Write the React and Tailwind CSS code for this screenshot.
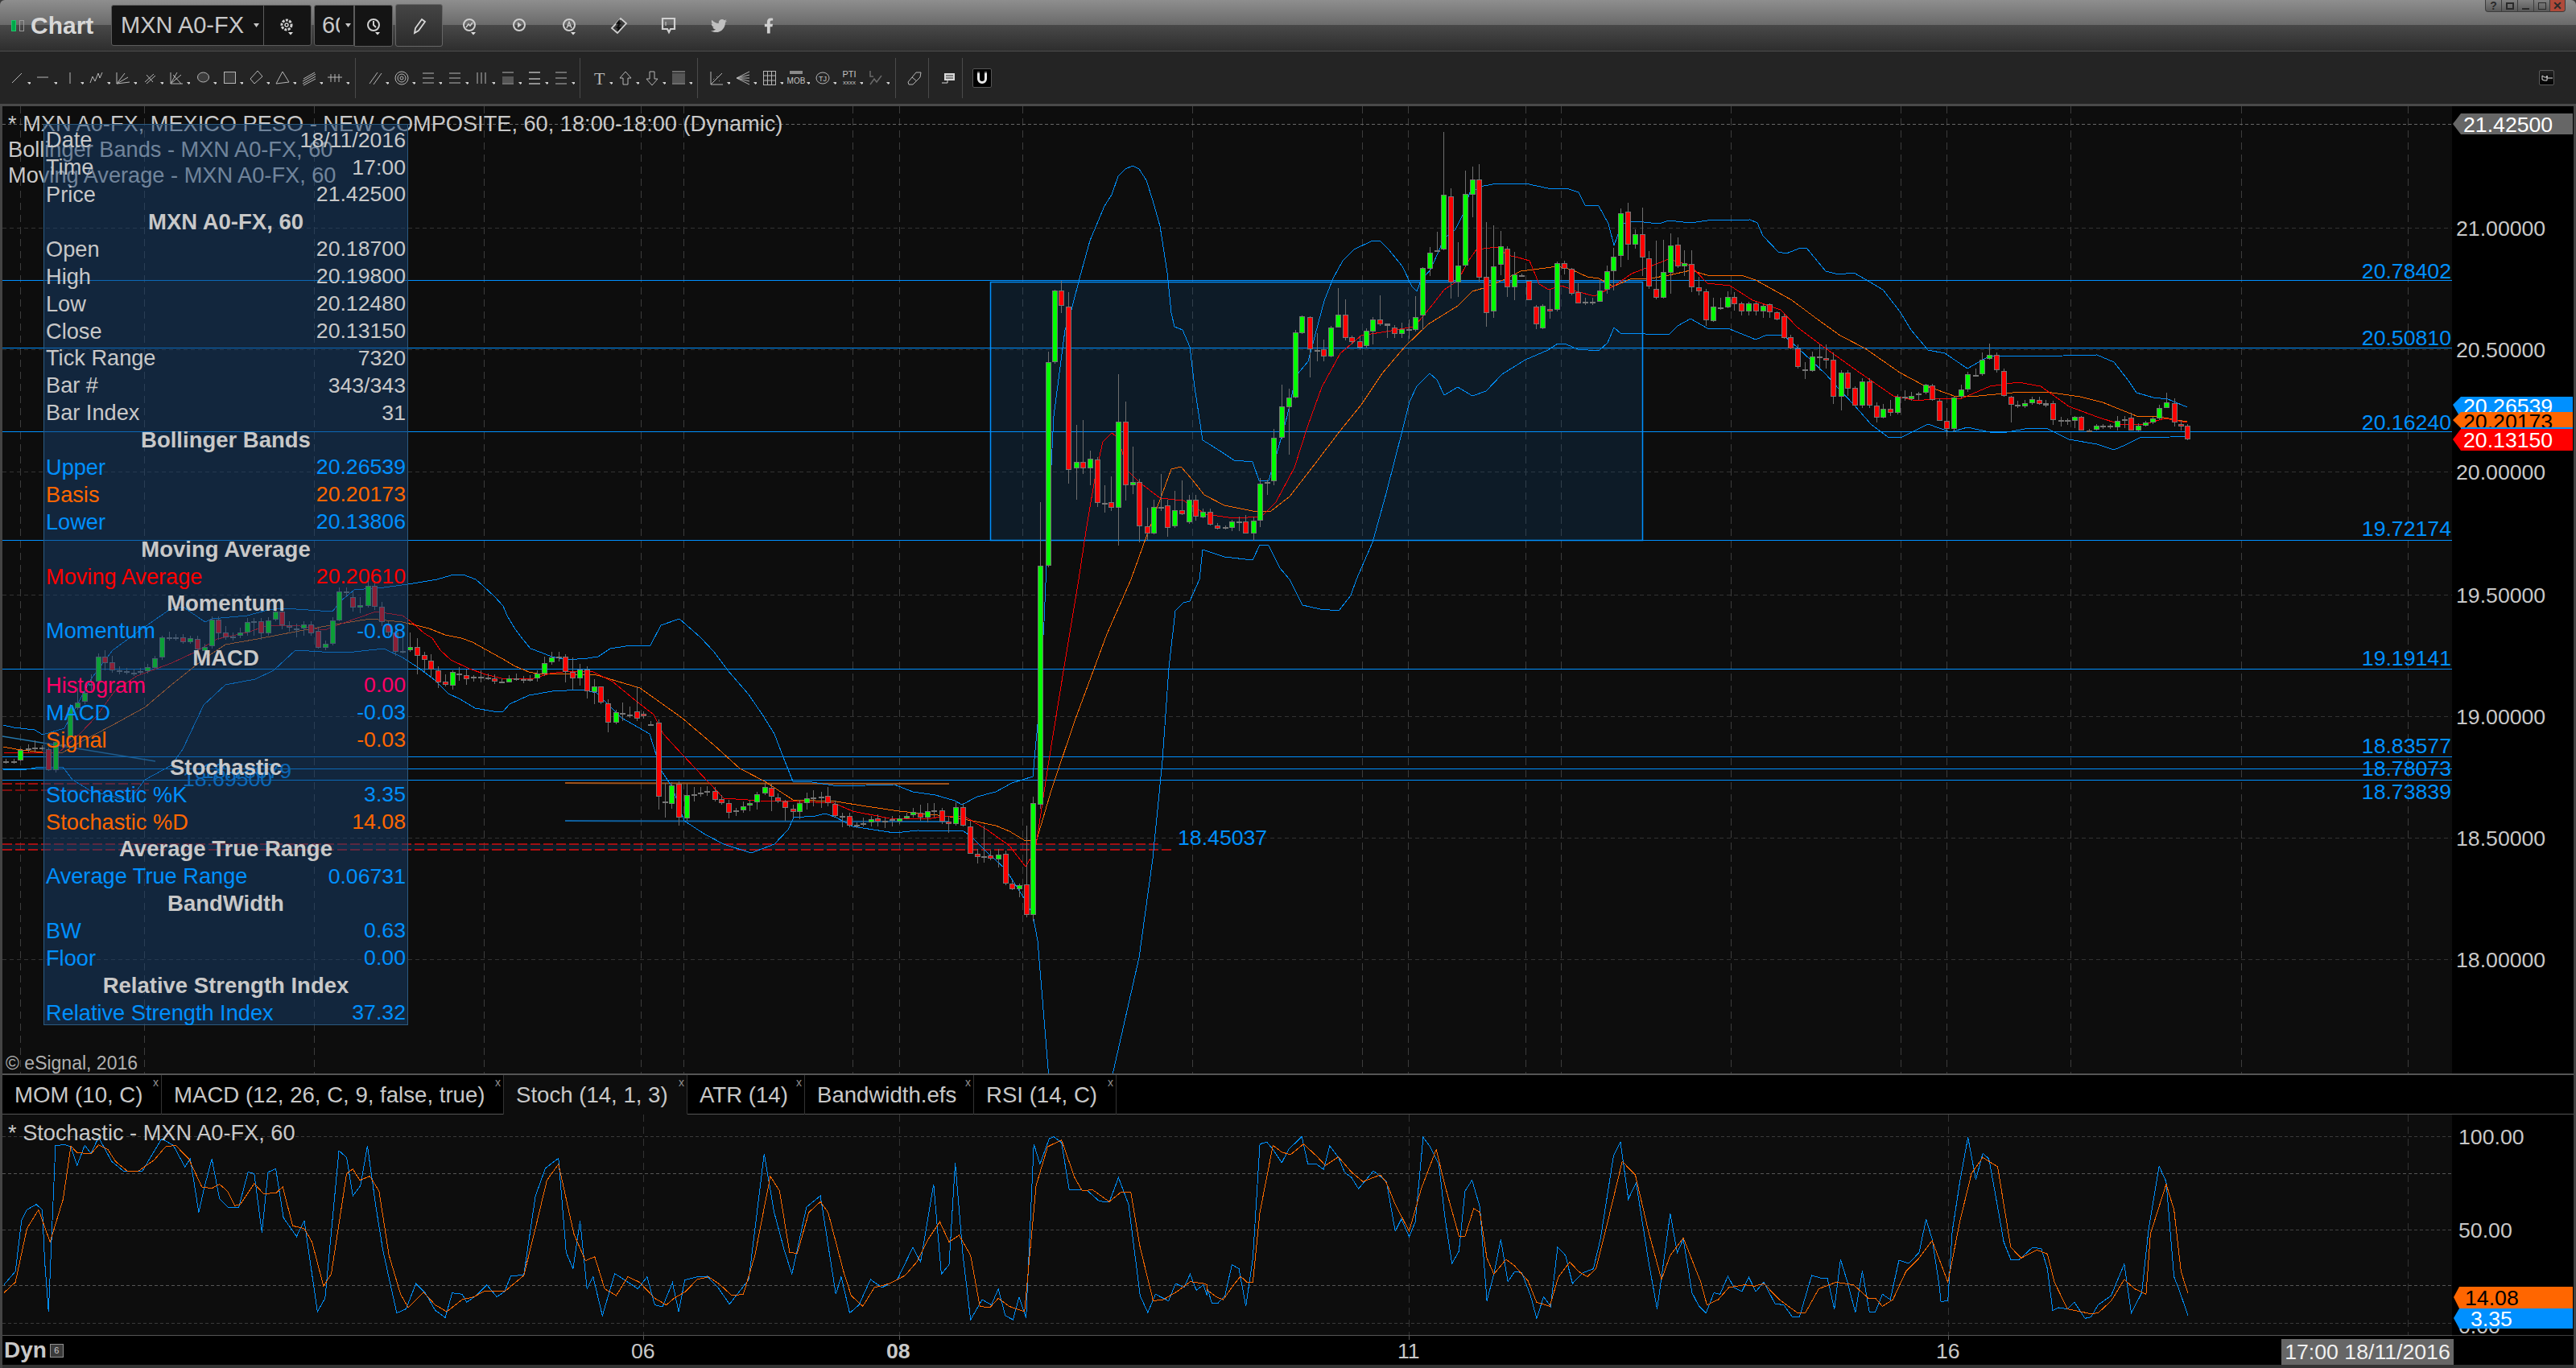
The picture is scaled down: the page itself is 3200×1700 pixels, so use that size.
import React from 'react';
import { FaTwitter, FaFacebookF } from 'react-icons/fa';

// ============================================================================
// CHART DATA (page pixel coordinates)
// ============================================================================

// x, body top, body bottom, wick top, wick bottom, kind
const CANDLES = [
  [7,946,946,943,949,'n'],[17,946,946,943,949,'n'],[25,932,944,930,946,'g'],[35,930,930,925,935,'n'],[43,929,929,920,935,'n'],[52,929,929,926,933,'n'],
  [60,931,956,929,958,'r'],[69,922,956,920,960,'g'],[78,925,925,918,930,'n'],[87,879,915,875,918,'g'],[96,873,879,855,882,'g'],[105,861,871,855,875,'g'],
  [113,850,850,838,858,'n'],[122,816,846,812,850,'g'],[130,816,823,808,833,'r'],[139,823,832,815,836,'r'],[148,833,834,828,838,'r'],[157,834,835,830,838,'r'],
  [166,836,836,831,840,'n'],[174,834,834,830,838,'n'],[183,829,833,825,837,'g'],[192,818,829,815,832,'g'],[201,792,816,790,820,'g'],[210,792,792,785,796,'n'],
  [218,792,792,788,796,'n'],[227,792,797,788,800,'r'],[236,793,797,790,800,'g'],[245,794,806,790,810,'r'],[254,804,808,800,812,'g'],[263,770,802,766,806,'g'],
  [271,770,786,766,795,'r'],[280,786,791,778,795,'r'],[289,791,791,786,796,'n'],[298,786,789,780,793,'g'],[307,773,785,768,790,'g'],[315,772,772,768,790,'n'],
  [324,772,786,768,795,'r'],[333,771,786,767,790,'g'],[342,760,769,752,772,'g'],[350,760,776,756,782,'r'],[359,777,779,772,785,'r'],[368,781,781,775,792,'n'],
  [377,776,780,772,790,'g'],[386,776,786,772,790,'r'],[395,784,804,780,806,'r'],[404,800,804,796,808,'g'],[413,771,799,767,802,'g'],[421,735,770,730,772,'g'],
  [430,735,735,730,742,'n'],[438,742,754,735,760,'r'],[447,752,754,742,762,'g'],[457,728,752,722,755,'g'],[465,728,753,722,758,'r'],[474,754,772,748,778,'r'],
  [482,776,785,772,790,'r'],[491,786,809,780,815,'r'],[500,809,809,785,812,'n'],
  [509,804,807,786,810,'g'],[518,804,814,793,838,'r'],[527,814,819,810,835,'r'],[535,821,831,813,842,'r'],[544,833,847,828,855,'r'],[553,847,850,838,853,'r'],
  [562,835,851,833,857,'g'],[570,837,837,829,846,'n'],[579,839,843,832,851,'r'],[588,841,841,839,847,'n'],[597,841,841,833,848,'n'],[606,842,842,837,845,'n'],
  [614,843,846,838,850,'r'],[623,847,847,843,849,'n'],[632,843,847,839,848,'g'],[641,843,844,837,846,'r'],[650,844,845,840,849,'r'],[658,844,845,839,847,'g'],
  [667,837,842,833,847,'g'],[676,824,836,816,840,'g'],[685,817,822,810,826,'g'],[694,816,816,810,822,'n'],[702,816,834,813,848,'r'],[711,835,842,817,857,'r'],
  [720,832,842,825,852,'g'],[729,832,858,828,868,'r'],[738,853,859,844,875,'g'],[746,853,872,853,875,'r'],
  [755,874,897,869,910,'r'],[765,885,897,882,900,'g'],[773,886,886,873,896,'n'],[782,888,888,878,892,'n'],[791,884,892,853,896,'r'],[799,887,889,884,893,'r'],
  [808,900,900,896,902,'n'],[818,898,989,894,1006,'r'],[826,996,996,973,1016,'n'],[834,976,998,972,1005,'g'],[843,974,1015,971,1026,'r'],[853,988,1016,974,1020,'g'],
  [862,987,987,978,996,'n'],[870,985,985,978,990,'n'],[878,983,983,977,989,'n'],[888,983,993,978,996,'r'],[896,993,997,988,1000,'r'],[905,998,1009,994,1017,'r'],
  [914,1007,1007,1004,1014,'g'],[923,1002,1006,996,1010,'g'],[931,998,1000,994,1008,'g'],[940,987,996,984,1006,'g'],[950,978,985,973,988,'g'],[958,979,989,974,1008,'r'],
  [966,991,995,986,998,'r'],[975,996,1003,994,1020,'r'],[985,1005,1008,1000,1016,'r'],[993,998,1008,994,1018,'g'],[1002,992,997,985,1006,'g'],[1010,991,991,982,1002,'n'],
  [1020,990,990,984,1004,'n'],[1028,989,997,978,1002,'r'],[1037,999,1013,995,1016,'r'],[1046,1014,1014,1010,1028,'n'],[1055,1014,1025,1010,1028,'r'],[1064,1025,1025,1022,1029,'n'],
  [1072,1023,1023,1016,1027,'n'],[1082,1018,1021,1014,1027,'g'],[1090,1017,1020,1012,1027,'r'],[1099,1020,1020,1016,1029,'n'],[1108,1018,1018,1014,1027,'n'],[1117,1017,1020,1013,1024,'g'],
  [1126,1014,1016,1010,1018,'g'],[1134,1009,1012,1004,1016,'g'],[1143,1010,1015,1000,1020,'r'],[1152,1008,1015,998,1022,'g'],[1160,1007,1007,998,1016,'n'],[1170,1007,1020,1004,1024,'r'],
  [1178,1021,1023,1014,1035,'r'],[1187,1003,1023,997,1026,'g'],[1196,1003,1025,998,1027,'r'],[1205,1027,1060,1020,1061,'r'],[1214,1061,1064,1055,1073,'r'],[1222,1064,1064,1026,1072,'n'],
  [1230,1063,1066,1057,1069,'r'],[1240,1062,1067,1055,1078,'g'],[1249,1061,1097,1057,1100,'r'],[1257,1098,1104,1094,1106,'r'],[1266,1100,1104,1098,1115,'g'],[1275,1099,1136,1026,1140,'r'],
  [1283,998,1136,990,1145,'g'],[1292,703,999,624,1005,'g'],[1302,450,702,437,705,'g'],[1310,361,449,360,452,'g'],[1318,361,379,349,389,'r'],[1327,381,583,363,601,'r'],
  [1337,574,581,528,621,'g'],[1345,574,581,522,589,'r'],[1354,570,581,560,603,'g'],[1363,571,624,568,630,'r'],[1372,625,625,603,637,'n'],[1380,624,630,592,635,'r'],
  [1389,524,630,465,678,'g'],[1398,524,602,499,622,'r'],[1407,599,602,555,614,'g'],[1415,599,653,595,674,'r'],[1425,654,662,631,671,'r'],[1433,630,662,621,664,'g'],
  [1442,630,630,589,635,'n'],[1450,628,655,621,667,'r'],[1459,634,653,610,656,'g'],[1468,634,638,597,640,'r'],[1477,621,648,615,651,'g'],[1485,621,641,615,647,'r'],
  [1494,636,642,632,644,'g'],[1503,636,651,632,653,'r'],[1512,653,656,650,658,'r'],[1522,655,655,653,658,'n'],[1530,648,655,646,660,'g'],[1539,648,648,642,660,'n'],
  [1547,648,662,640,662,'r'],[1557,647,662,642,672,'g'],[1565,601,646,594,655,'g'],[1574,599,599,596,615,'n'],[1582,544,597,533,603,'g'],[1592,505,543,478,546,'g'],
  [1601,494,505,483,565,'g'],[1609,413,493,410,495,'g'],[1617,393,413,392,415,'g'],[1627,394,433,393,469,'r'],[1636,435,435,414,449,'n'],[1644,434,442,422,449,'r'],
  [1653,407,442,405,444,'g'],[1662,391,406,358,406,'g'],[1671,391,419,372,423,'r'],[1679,419,424,417,428,'r'],[1689,424,431,417,434,'r'],[1697,411,429,408,433,'g'],
  [1705,397,411,394,428,'g'],[1714,397,402,367,405,'r'],[1723,402,404,402,420,'n'],[1732,407,414,404,420,'r'],[1741,409,414,401,420,'g'],[1750,409,409,397,421,'n'],
  [1758,394,409,368,412,'g'],[1767,333,391,332,410,'g'],[1776,314,333,307,343,'g'],[1785,311,312,288,313,'n'],[1793,242,309,164,311,'g'],[1802,244,350,234,371,'r'],
  [1811,330,350,301,369,'g'],[1820,241,329,212,332,'g'],[1829,223,241,207,270,'g'],[1837,223,344,204,350,'r'],[1846,344,388,276,406,'r'],[1855,331,386,280,395,'g'],
  [1864,306,328,287,342,'g'],[1872,309,356,306,369,'r'],[1881,341,356,313,373,'g'],[1890,342,342,340,344,'n'],[1899,349,372,348,373,'r'],[1908,381,402,379,409,'r'],
  [1916,380,407,378,409,'g'],[1925,384,386,360,396,'r'],[1934,327,384,325,387,'g'],[1943,327,333,324,341,'r'],[1952,334,364,333,367,'r'],[1960,363,376,352,377,'r'],
  [1969,375,375,370,379,'n'],[1978,375,375,370,379,'n'],[1987,361,374,348,375,'g'],[1996,337,359,330,365,'g'],[2004,319,336,308,361,'g'],[2013,265,317,259,332,'g'],
  [2022,263,303,252,323,'r'],[2031,291,303,285,309,'g'],[2040,291,319,258,343,'r'],[2048,321,355,312,359,'r'],[2057,359,369,299,372,'r'],[2066,338,369,298,371,'g'],
  [2075,305,338,290,365,'g'],[2084,304,330,295,333,'r'],[2092,327,330,311,343,'g'],[2101,328,356,311,363,'r'],[2110,357,361,344,367,'r'],[2119,362,397,359,405,'r'],
  [2128,381,398,370,400,'g'],[2137,382,382,370,385,'n'],[2146,369,381,362,383,'g'],[2154,369,377,363,386,'r'],[2163,377,386,375,392,'r'],[2172,377,386,375,392,'g'],
  [2181,377,386,375,392,'r'],[2190,380,386,378,395,'g'],[2198,378,387,377,395,'r'],[2207,388,396,387,398,'r'],[2216,393,419,390,421,'r'],[2224,419,432,416,434,'r'],
  [2233,433,455,428,458,'r'],[2242,459,459,450,471,'n'],[2251,443,460,437,462,'g'],[2260,443,443,428,460,'n'],[2268,445,447,428,458,'r'],[2277,447,492,438,502,'r'],
  [2287,463,492,460,510,'g'],[2295,463,482,460,492,'r'],[2304,482,503,480,505,'r'],[2313,474,503,470,507,'g'],[2322,474,503,470,507,'r'],[2331,504,518,500,525,'r'],
  [2339,508,518,502,520,'g'],[2348,508,512,497,517,'r'],[2357,493,512,490,515,'g'],[2366,493,493,485,498,'n'],[2374,492,495,487,498,'g'],[2383,489,489,487,497,'n'],
  [2392,478,487,477,490,'g'],[2400,479,496,477,498,'r'],[2409,498,522,495,523,'r'],[2418,523,532,507,542,'r'],[2427,494,532,493,537,'g'],[2436,484,492,478,495,'g'],
  [2444,465,483,462,487,'g'],[2454,466,466,458,468,'n'],[2462,447,464,438,467,'g'],[2471,441,445,427,447,'g'],[2480,441,459,438,463,'r'],[2489,461,491,458,493,'r'],
  [2498,493,502,492,525,'r'],[2506,503,503,498,507,'n'],[2515,501,504,497,507,'g'],[2524,496,500,493,503,'g'],[2533,497,501,493,503,'r'],[2541,501,503,497,506,'n'],
  [2550,501,521,498,528,'r'],[2560,522,522,518,530,'n'],[2568,522,522,520,528,'n'],[2577,518,522,517,532,'g'],[2585,518,534,517,535,'r'],[2595,535,535,533,536,'n'],
  [2604,529,533,527,535,'g'],[2612,529,529,527,533,'n'],[2621,529,529,527,533,'n'],[2630,523,530,517,535,'g'],[2639,521,521,517,532,'g'],[2647,519,534,513,535,'r'],
  [2656,529,534,526,536,'g'],[2665,525,528,523,530,'g'],[2674,520,524,518,527,'g'],[2682,507,519,503,522,'g'],[2691,500,506,488,507,'g'],[2701,501,524,495,530,'r'],
  [2709,527,529,522,535,'r'],[2717,529,545,527,547,'r'],
];

const UPPER = [[4,901],[17,904],[43,907],[53,913],[80,905],[113,844],[140,808],[177,781],[210,758],[227,754],[255,773],[263,769],[307,765],[333,758],[353,756],[413,760],[423,747],[440,733],[477,730],[507,726],[543,720],[560,715],[575,714],[591,720],[600,728],[615,742],[625,753],[630,765],[640,782],[650,795],[659,806],[673,811],[685,816],[700,819],[717,819],[730,818],[743,816],[758,806],[784,802],[808,802],[821,777],[844,769],[870,792],[887,810],[904,833],[930,863],[947,888],[962,912],[973,941],[985,971],[1002,971],[1042,977],[1076,976],[1111,975],[1134,984],[1162,988],[1186,995],[1195,1000],[1214,990],[1237,984],[1257,973],[1283,965],[1289,900],[1297,773],[1300,700],[1309,517],[1323,410],[1331,385],[1341,346],[1354,299],[1372,256],[1381,242],[1389,219],[1398,210],[1407,206],[1415,210],[1424,224],[1432,249],[1441,281],[1450,339],[1455,389],[1459,406],[1469,410],[1478,431],[1484,481],[1494,547],[1504,553],[1521,564],[1533,572],[1556,574],[1564,597],[1576,597],[1586,564],[1599,517],[1610,467],[1625,449],[1645,374],[1656,346],[1668,324],[1682,310],[1705,299],[1714,299],[1725,310],[1742,331],[1754,356],[1760,362],[1765,349],[1777,335],[1785,317],[1794,296],[1808,285],[1817,267],[1826,239],[1843,231],[1860,228],[1895,228],[1923,234],[1946,234],[1961,239],[1969,255],[1986,256],[1998,278],[2005,305],[2015,278],[2032,275],[2061,278],[2073,274],[2100,277],[2121,274],[2174,273],[2183,277],[2190,293],[2209,313],[2219,315],[2237,308],[2244,308],[2268,337],[2284,341],[2303,339],[2317,347],[2339,360],[2360,387],[2374,410],[2395,435],[2416,439],[2444,458],[2458,450],[2472,442],[2521,443],[2563,442],[2605,441],[2626,450],[2644,473],[2654,488],[2675,494],[2693,496],[2717,506]];

const LOWER = [[4,956],[33,956],[50,953],[78,953],[90,969],[113,983],[160,995],[180,969],[213,951],[227,931],[253,876],[280,851],[317,844],[340,833],[367,808],[400,810],[440,810],[477,806],[500,817],[520,830],[540,845],[557,862],[572,869],[590,880],[613,884],[625,884],[633,875],[657,864],[686,859],[723,857],[741,861],[772,892],[807,912],[821,957],[835,978],[850,1020],[876,1037],[899,1049],[933,1060],[962,1049],[979,1031],[986,1016],[1013,1014],[1025,1011],[1039,1016],[1059,1027],[1111,1035],[1140,1032],[1197,1033],[1206,1039],[1226,1059],[1249,1080],[1272,1116],[1283,1137],[1289,1169],[1303,1340],[1381,1340],[1415,1190],[1432,1067],[1444,945],[1452,830],[1460,759],[1470,749],[1478,747],[1490,720],[1494,683],[1521,692],[1556,696],[1565,677],[1576,678],[1590,706],[1602,720],[1618,752],[1640,757],[1663,759],[1678,740],[1685,720],[1705,674],[1722,613],[1742,535],[1751,499],[1760,480],[1776,464],[1785,472],[1794,491],[1811,481],[1829,492],[1846,486],[1866,465],[1895,447],[1923,435],[1935,427],[1946,428],[1960,434],[1986,436],[1997,426],[2005,407],[2014,415],[2027,414],[2044,415],[2073,416],[2084,405],[2100,396],[2121,408],[2149,409],[2181,422],[2195,416],[2216,417],[2233,432],[2268,465],[2284,483],[2303,503],[2324,527],[2345,543],[2363,543],[2395,527],[2423,537],[2444,531],[2472,537],[2493,537],[2521,532],[2542,532],[2570,546],[2605,552],[2626,559],[2640,553],[2658,544],[2696,543],[2717,542]];

const BASIS = [[4,928],[20,931],[53,935],[78,935],[100,922],[140,901],[180,879],[213,851],[253,819],[280,801],[320,794],[367,785],[410,777],[460,769],[500,773],[517,777],[533,781],[553,789],[573,793],[587,798],[603,807],[623,818],[640,828],[657,835],[667,837],[693,837],[713,838],[738,838],[795,855],[847,892],[887,926],[919,955],[950,971],[985,994],[1013,995],[1039,996],[1076,1002],[1117,1008],[1174,1014],[1208,1020],[1237,1026],[1254,1033],[1274,1045],[1288,1043],[1306,982],[1335,896],[1375,788],[1405,720],[1424,667],[1441,621],[1455,583],[1467,580],[1481,596],[1496,615],[1521,628],[1556,635],[1579,635],[1602,617],[1630,581],[1665,535],[1691,503],[1717,464],[1745,431],[1774,403],[1811,380],[1829,362],[1843,358],[1869,347],[1889,337],[1935,331],[1952,335],[1972,344],[1986,346],[2004,356],[2027,346],[2050,346],[2073,342],[2100,336],[2121,342],[2163,342],[2181,348],[2226,373],[2258,397],[2286,417],[2317,433],[2360,463],[2388,478],[2430,493],[2458,492],[2500,488],[2542,487],[2584,493],[2612,500],[2654,517],[2682,518],[2717,524]];

const AVERAGE = [[4,935],[53,936],[73,935],[100,911],[120,890],[143,858],[170,840],[213,824],[243,810],[270,794],[307,786],[333,777],[367,777],[403,783],[427,774],[467,760],[500,765],[510,772],[527,787],[537,793],[547,808],[560,820],[583,831],[603,838],[623,843],[663,843],[683,837],[707,834],[737,835],[761,847],[790,871],[812,888],[824,912],[847,937],[881,973],[899,992],[944,995],[990,996],[1036,998],[1059,1008],[1105,1017],[1151,1018],[1174,1014],[1197,1014],[1226,1031],[1254,1051],[1274,1077],[1286,1057],[1303,945],[1323,822],[1340,720],[1349,660],[1361,589],[1370,549],[1381,538],[1389,544],[1401,585],[1415,599],[1441,619],[1470,622],[1498,639],[1533,644],[1567,642],[1585,624],[1608,581],[1625,528],[1642,481],[1665,439],[1691,417],[1722,412],[1757,406],[1780,378],[1794,360],[1811,349],[1823,326],[1834,310],[1860,307],[1872,317],[1886,320],[1900,324],[1912,353],[1924,360],[1940,355],[1958,362],[1981,368],[2004,356],[2027,340],[2050,331],[2073,322],[2100,330],[2121,352],[2149,355],[2177,373],[2212,385],[2233,407],[2268,433],[2310,463],[2352,492],[2381,498],[2409,495],[2437,495],[2472,480],[2507,475],[2535,480],[2570,505],[2605,518],[2633,527],[2661,528],[2689,520],[2717,525]];

// stochastic traces, read off the crops: left part then right part
const K_LEFT = [[5,890],[20,840],[28,650],[35,610],[47,590],[55,610],[58,800],[63,990],[72,370],[85,368],[92,375],[100,445],[110,370],[118,400],[128,340],[145,430],[160,465],[185,465],[210,345],[225,370],[240,450],[247,420],[258,620],[265,530],[275,420],[285,570],[297,603],[310,600],[322,470],[330,475],[340,695],[348,470],[358,457],[368,640],[385,710],[395,650],[412,990],[422,940],[440,390],[450,415],[458,558],[468,520],[477,372],[488,600],[497,760],[515,995],[527,980],[540,885],[552,920],[565,985],[578,1012],[587,920],[600,925],[606,955],[620,925],[632,890],[645,935],[655,915],[663,858],[680,852],[695,560],[708,455],[725,418],[735,770],[744,830],[753,650],[762,905],[770,860],[782,1005],[798,848],[810,870],[828,905],[840,860],[850,965],[860,972],[873,882],[881,990],[889,872],[905,860],[918,858],[932,900],[947,962],[972,870],[992,402],[1005,620],[1018,760],[1028,850],[1047,600],[1065,558],[1085,925],[1092,860],[1103,995],[1115,965],[1130,870],[1145,900],[1165,870],[1185,750],[1195,805],[1212,515],[1222,850],[1232,815],[1240,435],[1250,780],[1260,1020],[1275,945],[1287,965],[1296,905],[1305,1005],[1315,1020],[1323,935],[1332,1015],[1342,365],[1350,440],[1362,345],[1368,338],[1378,360],[1388,535],[1400,535],[1412,540],[1427,578],[1440,582],[1452,490],[1465,590],[1480,930],[1490,993],[1500,925],[1517,950],[1526,885],[1537,900],[1545,850],[1553,910],[1562,890],[1567,930]];
const K_RIGHT = [[0,905],[5,958],[12,958],[20,930],[28,815],[36,830],[44,970],[52,790],[60,365],[68,358],[75,385],[85,435],[93,385],[108,337],[115,440],[125,440],[133,460],[140,372],[150,415],[157,470],[165,490],[173,532],[190,465],[205,505],[215,690],[222,645],[231,710],[238,655],[247,340],[255,375],[265,440],[272,640],[280,810],[288,765],[295,540],[303,500],[312,600],[320,950],[328,850],[336,720],[344,878],[352,840],[360,845],[370,930],[377,1015],[385,935],[393,970],[401,750],[410,780],[418,885],[430,845],[442,830],[450,720],[465,410],[473,358],[482,570],[491,510],[505,800],[515,980],[530,625],[538,770],[545,720],[555,920],[563,970],[571,995],[580,920],[587,925],[596,858],[603,900],[612,915],[620,862],[628,915],[637,880],[650,960],[660,965],[670,1010],[678,1010],[692,855],[703,865],[710,865],[718,980],[725,795],[733,880],[742,993],[750,838],[758,990],[765,990],[773,925],[782,945],[792,798],[803,810],[815,770],[823,645],[830,720],[838,890],[840,952],[848,950],[853,690],[862,500],[871,340],[880,498],[888,400],[895,420],[905,600],[912,730],[920,795],[930,795],[945,750],[955,755],[962,830],[968,985],[975,975],[985,980],[993,955],[1005,1015],[1012,1010],[1020,965],[1035,930],[1050,812],[1058,995],[1070,920],[1078,680],[1090,448],[1098,505],[1107,860],[1113,910],[1123,1005]];
const D_LEFT = [[5,920],[20,880],[35,680],[50,610],[65,730],[82,570],[92,372],[100,397],[118,402],[128,368],[140,385],[150,430],[165,465],[180,465],[200,425],[215,375],[228,370],[245,420],[262,525],[275,530],[285,515],[295,540],[305,595],[312,590],[330,512],[342,550],[358,548],[367,525],[380,670],[395,680],[405,730],[420,895],[430,850],[450,475],[458,458],[467,500],[480,485],[492,540],[505,780],[520,925],[530,975],[550,918],[565,965],[580,990],[600,945],[615,935],[630,912],[655,915],[680,855],[695,680],[710,500],[725,440],[745,700],[760,800],[772,785],[785,905],[800,930],[815,860],[830,880],[850,940],[865,965],[875,940],[890,915],[905,870],[920,860],[935,890],[950,930],[965,925],[980,780],[1000,485],[1012,540],[1025,770],[1035,772],[1050,620],[1065,580],[1075,620],[1095,840],[1105,930],[1120,970],[1135,900],[1155,885],[1175,855],[1190,805],[1205,720],[1220,655],[1232,730],[1245,705],[1260,780],[1272,970],[1285,975],[1296,940],[1310,970],[1330,990],[1345,520],[1360,375],[1378,350],[1395,490],[1405,540],[1418,535],[1440,580],[1455,545],[1468,545],[1480,750],[1497,950],[1510,945],[1528,915],[1545,878],[1562,885],[1567,890]];
const D_RIGHT = [[0,910],[10,935],[18,945],[30,890],[38,858],[45,880],[52,880],[60,620],[75,370],[85,395],[95,405],[110,365],[125,410],[135,445],[150,413],[165,470],[178,505],[198,480],[205,510],[215,590],[231,690],[245,530],[262,385],[272,520],[288,708],[295,708],[305,605],[312,620],[320,790],[328,850],[342,795],[352,820],[367,875],[377,955],[392,970],[402,860],[415,805],[425,840],[435,860],[445,830],[458,660],[475,430],[490,480],[505,690],[520,870],[530,780],[545,715],[565,880],[572,965],[585,945],[597,900],[615,890],[627,895],[637,885],[655,945],[675,993],[685,993],[700,905],[720,880],[740,890],[757,940],[765,940],[773,970],[785,945],[800,840],[815,790],[830,725],[848,880],[862,650],[875,475],[888,415],[905,450],[920,750],[932,790],[950,760],[962,775],[970,880],[985,980],[1000,990],[1012,998],[1020,995],[1035,950],[1050,870],[1062,905],[1075,925],[1080,700],[1098,515],[1107,610],[1115,840],[1123,922]];

const leftTrace = (pts) => pts.map(([x, y]) => [x / 1.045, 1300 + y / 3]);
const rightTrace = (pts) => pts.map(([x, y]) => [1500 + x / 0.922, 1300 + y / 3]);
const KLINE = [...leftTrace(K_LEFT), ...rightTrace(K_RIGHT)];
const DLINE = [...leftTrace(D_LEFT), ...rightTrace(D_RIGHT)];

const GRID_X = [25, 179, 390, 601, 796, 849, 1059, 1117, 1270, 1481, 1692, 1749, 1895, 1939, 2150, 2361, 2418, 2572, 2784, 2991];
const GRID_Y = [283, 434, 586, 739, 890, 1041, 1192];
const LEVELS = [
  [348, 337, '20.78402'], [432, 420, '20.50810'], [536, 525, '20.16240'], [671, 657, '19.72174'],
  [831, 818, '19.19141'], [940, 927, '18.83577'], [955, 955, '18.78073'], [969, 984, '18.73839'],
];
const AXIS_PRICES = [[283, '21.00000'], [434, '20.50000'], [586, '20.00000'], [739, '19.50000'], [890, '19.00000'], [1041, '18.50000'], [1192, '18.00000']];

const WINDOW_ROWS = [
  ['Date', '18/11/2016'], ['Time', '17:00'], ['Price', '21.42500'], ['MXN A0-FX, 60'],
  ['Open', '20.18700'], ['High', '20.19800'], ['Low', '20.12480'], ['Close', '20.13150'],
  ['Tick Range', '7320'], ['Bar #', '343/343'], ['Bar Index', '31'], ['Bollinger Bands'],
  ['Upper', '20.26539', 'text-[#0090ff]'], ['Basis', '20.20173', 'text-[#ff6600]'], ['Lower', '20.13806', 'text-[#0090ff]'],
  ['Moving Average'], ['Moving Average', '20.20610', 'text-[#ff0000]'],
  ['Momentum'], ['Momentum', '-0.08', 'text-[#0090ff]'],
  ['MACD'], ['Histogram', '0.00', 'text-[#ff0066]'], ['MACD', '-0.03', 'text-[#0090ff]'], ['Signal', '-0.03', 'text-[#ff6600]'],
  ['Stochastic'], ['Stochastic %K', '3.35', 'text-[#0090ff]'], ['Stochastic %D', '14.08', 'text-[#ff6600]'],
  ['Average True Range'], ['Average True Range', '0.06731', 'text-[#0090ff]'],
  ['BandWidth'], ['BW', '0.63', 'text-[#0090ff]'], ['Floor', '0.00', 'text-[#0090ff]'],
  ['Relative Strength Index'], ['Relative Strength Index', '37.32', 'text-[#0090ff]'],
];

const TABS = [
  ['MOM (10, C)', 'w-[198px]'], ['MACD (12, 26, C, 9, false, true)', 'w-[425px]'], ['Stoch (14, 1, 3)', 'w-[228px]'],
  ['ATR (14)', 'w-[146px]'], ['Bandwidth.efs', 'w-[210px]'], ['RSI (14, C)', 'w-[177px]'],
];

// ============================================================================
// SVG PIECES
// ============================================================================

const toPoints = (pts) => pts.map((p) => p.join(',')).join(' ');

// the reference draws its studies without anti-aliasing
const Trace = ({ pts, color }) => (
  <polyline points={toPoints(pts)} fill="none" stroke={color} strokeWidth="1" shapeRendering="crispEdges" />
);

const Candle = ({ data }) => {
  const [x, top, bottom, wickTop, wickBottom, kind] = data;
  const cx = Math.round(x) + 0.5;
  const fill = kind === 'g' ? '#00ff00' : kind === 'r' ? '#ff0000' : '#777777';
  return (
    <g shapeRendering="crispEdges">
      <line x1={cx} x2={cx} y1={wickTop} y2={wickBottom} stroke="#6e6e6e" strokeWidth="1" />
      <rect x={cx - 3} y={top} width="6" height={Math.max(bottom - top, 1)} fill={fill} stroke="#777777" strokeWidth="1" />
    </g>
  );
};

const MainPlot = () => (
  <svg className="block" width="3043" height="1202" viewBox="3 132 3043 1202">
    {GRID_X.map((x) => (
      <line key={x} x1={x + 0.5} x2={x + 0.5} y1="132" y2="1334" stroke="#3c3c3c" strokeDasharray="9 6" />
    ))}
    {GRID_Y.map((y) => (
      <line key={y} x1="3" x2="3046" y1={y + 0.5} y2={y + 0.5} stroke="#333333" strokeDasharray="5 4" />
    ))}
    <line x1="3" x2="3046" y1="154.5" y2="154.5" stroke="#666666" strokeDasharray="4 3" />

    {/* drawn tools */}
    <rect x="1230.5" y="350.5" width="810" height="321" fill="#114979" fillOpacity="0.25" stroke="#0090ff" strokeWidth="1.5" />
    <rect x="3" y="1049" width="1440" height="7" fill="#114979" fillOpacity="0.25" />
    <line x1="3" x2="1443" y1="1049" y2="1049" stroke="#d01010" strokeWidth="1.5" strokeDasharray="12 4" />
    <line x1="3" x2="1455" y1="1056" y2="1056" stroke="#e01010" strokeWidth="1.5" strokeDasharray="12 4" />
    <line x1="3" x2="185" y1="974" y2="974" stroke="#d01010" strokeWidth="1.5" strokeDasharray="12 4" />
    <line x1="3" x2="185" y1="982" y2="982" stroke="#a01010" strokeWidth="1.5" strokeDasharray="12 4" />
    <line x1="702" x2="1179" y1="973" y2="974" stroke="#a0521a" strokeWidth="2" />
    <line x1="702" x2="1179" y1="1020" y2="1021" stroke="#0f609f" strokeWidth="2" />
    <line x1="3" x2="193" y1="915" y2="946" stroke="#2478ad" strokeWidth="1.5" />

    {LEVELS.map(([y, labelY, label]) => (
      <g key={label}>
        <line x1="3" x2="3046" y1={y + 0.5} y2={y + 0.5} stroke="#0090ff" strokeWidth="1" />
        <text x="3045" y={labelY + 9} textAnchor="end" fill="#0090ff" fontSize="26.67">{label}</text>
      </g>
    ))}
    <text x="1463" y="1050" fill="#0090ff" fontSize="26.67">18.45037</text>
    <text x="227" y="977" fill="#0090ff" fontSize="26.67">18.69500</text>
    <text x="251" y="967" fill="#0090ff" fontSize="26.67">18.78079</text>

    <Trace pts={UPPER} color="#0090ff" />
    <Trace pts={LOWER} color="#0090ff" />
    <Trace pts={BASIS} color="#ff6a00" />
    <Trace pts={AVERAGE} color="#ff0000" />
    {CANDLES.map((c, i) => (
      <Candle key={i} data={c} />
    ))}
  </svg>
);

const PriceAxis = () => (
  <svg className="block" width="151" height="1202" viewBox="3046 132 151 1202">
    <polygon points="3047,154 3057,141 3196,141 3196,167 3057,167" fill="#666666" />
    <text x="3060" y="164" fill="#ffffff" fontSize="26.67">21.42500</text>
    {AXIS_PRICES.map(([y, label]) => (
      <text key={label} x="3051" y={y + 10} fill="#c8c8c8" fontSize="26.67">{label}</text>
    ))}
    <polygon points="3047,503 3057,493 3196,493 3196,520 3057,520" fill="#0090ff" />
    <text x="3060" y="514" fill="#ffffff" fontSize="26.67">20.26539</text>
    <polygon points="3047,522 3057,512 3196,512 3196,532 3057,532" fill="#ff6600" />
    <text x="3060" y="533" fill="#000000" fontSize="26.67">20.20173</text>
    <rect x="3057" y="531" width="139" height="3" fill="#0090ff" />
    <polygon points="3047,546 3057,533 3196,533 3196,560 3057,560" fill="#ff0000" />
    <text x="3060" y="556" fill="#ffffff" fontSize="26.67">20.13150</text>
  </svg>
);

const StochPlot = () => (
  <svg className="block" width="3043" height="274" viewBox="3 1385 3043 274">
    {[799, 1117, 1750, 2420, 2991].map((x) => (
      <line key={x} x1={x + 0.5} x2={x + 0.5} y1="1385" y2="1659" stroke="#333333" strokeDasharray="9 6" />
    ))}
    {[[1412, '#3a3a3a'], [1458, '#555555'], [1528, '#444444'], [1597, '#555555'], [1644, '#3a3a3a']].map(([y, color]) => (
      <line key={y} x1="3" x2="3046" y1={y + 0.5} y2={y + 0.5} stroke={color} strokeDasharray="4 3" />
    ))}
    <Trace pts={KLINE} color="#0090ff" />
    <Trace pts={DLINE} color="#ff6a00" />
  </svg>
);

const StochAxis = () => (
  <svg className="block" width="151" height="274" viewBox="3046 1385 151 274">
    <text x="3054" y="1422" fill="#c8c8c8" fontSize="26.67">100.00</text>
    <text x="3054" y="1538" fill="#c8c8c8" fontSize="26.67">50.00</text>
    <text x="3054" y="1657" fill="#c8c8c8" fontSize="26.67">0.00</text>
    <polygon points="3048,1612 3055,1599 3196,1599 3196,1626 3055,1626" fill="#ff6600" />
    <text x="3062" y="1622" fill="#000000" fontSize="26.67">14.08</text>
    <polygon points="3048,1638 3055,1626 3196,1626 3196,1651 3055,1651" fill="#0090ff" />
    <text x="3069" y="1648" fill="#ffffff" fontSize="26.67">3.35</text>
  </svg>
);

// ============================================================================
// TOOLBAR ICONS
// ============================================================================

const Tool = ({ children, caret = true }) => (
  <svg className="block shrink-0" width="33" height="24" viewBox="0 0 33 24" fill="none" stroke="#b5b5b5" strokeWidth="1">
    {children}
    {caret && <path d="M29 17h5l-2.5 3z" fill="#d0d0d0" stroke="none" />}
  </svg>
);

const Sep = ({ className }) => <div className={`w-px h-[50px] bg-[#4a4a4a] shrink-0 ${className}`} />;

const RoundIcon = ({ children, caret = true }) => (
  <svg className="block" width="26" height="26" viewBox="0 0 26 26" fill="none" stroke="#d0d0d0" strokeWidth="2">
    {children}
    {caret && <path d="M15 21h6l-3 3.5z" fill="#e0e0e0" stroke="none" />}
  </svg>
);

const Caret = ({ className }) => (
  <svg className={`block shrink-0 ${className}`} width="7" height="5" viewBox="0 0 7 5">
    <path d="M0 0h7L3.5 5z" fill="#c8c8c8" />
  </svg>
);

const HeaderCell = ({ children }) => <div className="w-[62px] shrink-0 flex items-center justify-center">{children}</div>;

// ============================================================================
// MAIN RENDER
// ============================================================================

const App = () => (
  <div className="w-[3200px] h-[1700px] overflow-hidden flex flex-col bg-[#3c3c3c] font-['Liberation_Sans',Arial,sans-serif] text-[26.67px] leading-none text-[#c8c8c8]">
    {/* Title bar */}
    <div className="relative h-[64px] shrink-0 flex items-center pl-[14px] rounded-t-[6px] border-b border-[#4c4c4c] bg-[linear-gradient(180deg,#8e8e8e_0%,#6a6a6a_50%,#484848_50%,#2e2e2e_100%)]">
      <div className="w-[6px] h-[14px] bg-[#00a84a] border border-[#1ec86a]" />
      <div className="w-[6px] h-[14px] ml-[4px] border border-[#9a9a9a]" />
      <span className="ml-[8px] w-[100px] text-[30px] font-bold text-[#d8d8d8]">Chart</span>

      <div className="h-[51px] w-[249px] flex items-center rounded-[3px] border border-[#5c5c5c] bg-[#141414]">
        <span className="ml-[11px] w-[165px] text-[29px]">MXN A0-FX</span>
        <Caret />
        <div className="ml-[5px] w-px h-full bg-[#5c5c5c]" />
        <div className="ml-[15px]">
          <RoundIcon>
            <circle cx="13" cy="12" r="6" strokeDasharray="3 1.4" strokeWidth="3" />
            <circle cx="13" cy="12" r="2" strokeWidth="1.5" />
          </RoundIcon>
        </div>
      </div>
      <div className="ml-[3px] h-[51px] w-[50px] flex items-center rounded-l-[3px] border border-[#5c5c5c] bg-[#141414] overflow-hidden">
        <span className="ml-[9px] w-[22px] overflow-hidden text-[29px]">60</span>
        <Caret className="ml-[7px]" />
      </div>
      <div className="h-[52px] w-[48px] flex items-center justify-center rounded-r-[3px] border border-[#5c5c5c] bg-[#141414]">
        <RoundIcon>
          <circle cx="13" cy="12" r="7" />
          <path d="M13 7v5l3 3" />
        </RoundIcon>
      </div>
      <div className="ml-[3px] h-[53px] w-[59px] flex items-center justify-center rounded-[3px] border border-[#666666] bg-[linear-gradient(180deg,#454545,#2b2b2b)]">
        <svg className="block" width="20" height="24" viewBox="0 0 20 24" fill="none" stroke="#d8d8d8" strokeWidth="1.8">
          <path d="M4 21l1-6L13 4l4 3L9 18z" />
        </svg>
      </div>

      <div className="ml-[2px] flex items-center">
        <HeaderCell>
          <RoundIcon>
            <circle cx="13" cy="12" r="7" />
            <path d="M9 15l3-4 2 2 3-4" strokeWidth="1.5" />
          </RoundIcon>
        </HeaderCell>
        <HeaderCell>
          <RoundIcon caret={false}>
            <circle cx="13" cy="12" r="7" />
            <path d="M11 8.5l5 3.5-5 3.5z" fill="#d0d0d0" stroke="none" />
          </RoundIcon>
        </HeaderCell>
        <HeaderCell>
          <RoundIcon>
            <circle cx="13" cy="12" r="7" />
            <path d="M10 16l3-8 3 8M11 13h4" strokeWidth="1.3" />
          </RoundIcon>
        </HeaderCell>
        <HeaderCell>
          <RoundIcon caret={false}>
            <path d="M15 4l7 6-11 12-7-6z" strokeWidth="1.8" fill="#3c3c3c" />
            <path d="M13 13V7l-2.5 3h5M12 12v6l2.5-3h-5" stroke="#0a0a0a" strokeWidth="1.6" />
          </RoundIcon>
        </HeaderCell>
        <HeaderCell>
          <RoundIcon caret={false}>
            <path d="M5 4h15v13h-5l-2 4-2-4H5z" strokeWidth="2.2" />
            <path d="M9 8v5" strokeWidth="1" />
          </RoundIcon>
        </HeaderCell>
        <HeaderCell>
          <FaTwitter className="w-[20px] h-[20px] text-[#c0c0c0]" />
        </HeaderCell>
        <HeaderCell>
          <FaFacebookF className="w-[12px] h-[22px] text-[#d0d0d0]" />
        </HeaderCell>
      </div>

      {/* Window buttons */}
      <div className="absolute top-0 right-[13px] h-[15px] w-[100px] flex rounded-b-[4px] overflow-hidden border border-t-0 border-[#3c3c3c] bg-[linear-gradient(180deg,#808080,#585858)] text-[14px] font-bold text-[#2a2a2a]">
        <div className="w-[20px] flex items-center justify-center border-r border-[#3c3c3c]">?</div>
        <div className="w-[20px] flex items-center justify-center border-r border-[#3c3c3c]">
          <div className="w-[10px] h-[9px] border-2 border-[#2a2a2a]" />
        </div>
        <div className="w-[20px] flex items-end justify-center pb-[2px] border-r border-[#3c3c3c]">
          <div className="w-[9px] h-[2px] bg-[#2a2a2a]" />
        </div>
        <div className="w-[20px] flex items-center justify-center border-r border-[#3c3c3c]">
          <div className="w-[10px] h-[9px] border border-[#2a2a2a]" />
        </div>
        <div className="flex-1 flex items-center justify-center bg-[#b04a3a]">✕</div>
      </div>
    </div>

    {/* Drawing toolbar */}
    <div className="h-[65px] shrink-0 flex items-center pl-[5px] bg-[#242424]">
      <Tool><path d="M10 18L22 6" /></Tool>
      <Tool><path d="M8 11h14" /></Tool>
      <Tool><path d="M16 5v14" /></Tool>
      <Tool><path d="M8 18l3-8 3 6 4-10 2 6 3-7" /></Tool>
      <Tool><path d="M8 19V5M8 19l16-2M8 19l14-8M8 19L18 6" /></Tool>
      <Tool><path d="M10 17L21 7M12 19L23 9M12 8l8 9" /></Tool>
      <Tool><path d="M9 19V5M9 19h15M9 19L22 8M9 19L17 5M12 8l10 11" /></Tool>
      <Tool><ellipse cx="16.5" cy="11" rx="7" ry="6" fill="#3c3c3c" /></Tool>
      <Tool><rect x="9.5" y="4.5" width="14" height="14" fill="#3a3a3a" /></Tool>
      <Tool><path d="M9 13L18 3l6 7-10 9z" /></Tool>
      <Tool><path d="M8 19L16 4l8 13z" /></Tool>
      <Tool><path d="M8 16L24 7M8 19l16-9M9 21l15-8M9 13l14-8" /></Tool>
      <Tool><path d="M6 11h18M10 7v10M15 7v10M20 7v10" /></Tool>
      <Sep className="ml-[7px]" />
      <div className="ml-[8px] flex">
        <Tool><path d="M9 19L19 5M14 20L24 6" /></Tool>
        <Tool>
          <circle cx="16" cy="12" r="8" />
          <circle cx="16" cy="12" r="5" />
          <circle cx="16" cy="12" r="2" />
        </Tool>
        <Tool><path d="M9 6h14M9 12h14M9 18h14" /></Tool>
        <Tool><path d="M9 6h14M9 12h14M9 18h14" /></Tool>
        <Tool><path d="M11 5v14M16 5v14M21 5v14" /></Tool>
        <Tool><path d="M9 5h14M9 19h14" /><rect x="9" y="10" width="14" height="8" fill="#555555" stroke="none" /></Tool>
        <Tool><path d="M9 5h14M9 13h14M9 19h14" strokeWidth="1.5" /></Tool>
        <Tool><path d="M9 5h14M9 12h14M9 19h14" /></Tool>
      </div>
      <Sep className="ml-[6px]" />
      <div className="ml-[7px] flex">
        <Tool><text x="10" y="20" fontSize="22" fontFamily="Liberation Serif, serif" fill="#b5b5b5" stroke="none">T</text></Tool>
        <Tool><path d="M16 4l7 8h-4v8h-6v-8H9z" /></Tool>
        <Tool><path d="M16 21l7-8h-4V4h-6v9H9z" /></Tool>
        <Tool><path d="M8 4h16M8 19h16" /><rect x="8" y="6" width="16" height="12" fill="#555555" stroke="none" /></Tool>
      </div>
      <Sep className="ml-[6px]" />
      <div className="ml-[7px] flex">
        <Tool><path d="M9 4v16h15M9 20L23 6" /><path d="M12 14l2-2M16 11l2-2M19 16l1-1" strokeDasharray="1 1.5" /></Tool>
        <Tool><path d="M24 4L8 12l16 8M8 12h16M24 8L8 12M24 16L8 12" /></Tool>
        <Tool>
          <rect x="8.5" y="3.5" width="15" height="17" />
          <path d="M13.5 4v16M18.5 4v16M9 9h14M9 15h14" />
        </Tool>
        <Tool>
          <rect x="8" y="3" width="16" height="4" fill="#8a8a8a" stroke="none" />
          <text x="16" y="19" textAnchor="middle" fontSize="10" fill="#c0c0c0" stroke="none">MOB</text>
        </Tool>
        <Tool>
          <ellipse cx="16" cy="12" rx="8" ry="7" />
          <text x="16" y="16" textAnchor="middle" fontSize="9" fill="#c0c0c0" stroke="none">TJ</text>
        </Tool>
        <Tool>
          <text x="16" y="11" textAnchor="middle" fontSize="11" fill="#c0c0c0" stroke="none">PTI</text>
          <text x="16" y="20" textAnchor="middle" fontSize="8" fill="#c0c0c0" stroke="none">xxxx</text>
        </Tool>
        <Tool><path d="M9 3v7h4M9 20l5-7 3 4 6-8" stroke="#6a6a6a" strokeWidth="1.5" /></Tool>
      </div>
      <Sep className="ml-[7px]" />
      <div className="ml-[7px]">
        <Tool caret={false}><path d="M8 17L18 5h6l-1 6-9 9H9zM13 11l6 5" /></Tool>
      </div>
      <Sep />
      <div className="ml-[8px]">
        <Tool caret={false}>
          <path d="M11 6h13v9H11z" fill="#d8d8d8" stroke="none" />
          <path d="M13 9h9M13 12h9" stroke="#242424" />
          <path d="M8 18h7v-3" stroke="#d8d8d8" />
        </Tool>
      </div>
      <Sep />
      <div className="ml-[12px] w-[24px] h-[24px] flex items-center justify-center rounded-[2px] border border-[#555555] bg-black">
        <svg className="block" width="14" height="18" viewBox="0 0 14 18" fill="none" stroke="#e8e8e8" strokeWidth="3">
          <path d="M2.5 1v9a4.5 4.5 0 0 0 9 0V1" />
          <path d="M1 2h3M10 2h3" stroke="#000000" strokeWidth="1" />
        </svg>
      </div>
      <div className="ml-auto mr-[27px] w-[19px] h-[19px] flex items-center justify-center rounded-[2px] border border-[#5a5a5a] bg-[linear-gradient(180deg,#222222,#000000)]">
        <svg className="block" width="14" height="8" viewBox="0 0 14 8" fill="none" stroke="#dcdcdc">
          <path d="M1 1l3 2h3V1v6H4L1 6zM7 4h7" />
        </svg>
      </div>
    </div>
    <div className="h-[3px] shrink-0 bg-[#4a4a4a]" />

    <div className="flex-1 flex flex-col min-h-0 border-x-[3px] border-[#444444]">
      {/* Price pane */}
      <div className="relative h-[1202px] shrink-0 flex bg-[#0d0d0d]">
        <MainPlot />
        <div className="bg-black">
          <PriceAxis />
        </div>

        {/* Study legends */}
        <div className="absolute left-[7px] top-[8px] flex flex-col gap-[5px] whitespace-nowrap text-[27.2px]">
          <span className="h-[27px]">* MXN A0-FX, MEXICO PESO - NEW COMPOSITE, 60, 18:00-18:00 (Dynamic)</span>
          <span className="h-[27px]">Bollinger Bands - MXN A0-FX, 60</span>
          <span className="h-[27px]">Moving Average - MXN A0-FX, 60</span>
        </div>
        <span className="absolute left-[4px] bottom-[1px] text-[23px] text-[#b0b0b0]">© eSignal, 2016</span>

        {/* Data window, see-through over the chart */}
        <div className="absolute left-[51px] top-[22px] w-[453px] h-[1120px] flex flex-col pt-[2px] px-[2px] border border-[#2a5a80] bg-[#173f6d]/50">
          {WINDOW_ROWS.map(([label, value, color], i) =>
            value ? (
              <div key={i} className={`h-[33.9px] shrink-0 flex items-center justify-between ${color || ''}`}>
                <span className="text-[27.2px]">{label}</span>
                <span>{value}</span>
              </div>
            ) : (
              <div key={i} className="h-[33.9px] shrink-0 flex items-center justify-center font-bold text-[27.5px]">
                {label}
              </div>
            )
          )}
        </div>
      </div>
      <div className="h-[2px] shrink-0 bg-[#555555]" />

      {/* Study tabs */}
      <div className="h-[49px] shrink-0 flex bg-black border-b border-[#555555] text-[27.6px]">
        {TABS.map(([label, width]) => {
          const active = label.startsWith('Stoch');
          return (
            <div
              key={label}
              className={`relative h-[49px] pl-[15px] pt-[11px] border-r border-[#333333] whitespace-nowrap ${width} ${active ? 'bg-[#0d0d0d] border-b border-b-[#0d0d0d]' : ''}`}
            >
              {label}
              <span className="absolute right-[3px] top-[2px] text-[14px] text-[#909090]">x</span>
            </div>
          );
        })}
      </div>

      {/* Stochastic pane */}
      <div className="relative h-[274px] shrink-0 flex bg-[#0d0d0d]">
        <StochPlot />
        <div className="bg-black">
          <StochAxis />
        </div>
        <span className="absolute left-[7px] top-[9px] whitespace-nowrap text-[27.2px]">* Stochastic - MXN A0-FX, 60</span>
      </div>
      <div className="h-px w-[3043px] shrink-0 bg-[#555555]" />

      {/* Time axis */}
      <div className="relative h-[36px] shrink-0 flex items-center bg-black">
        <span className="ml-[2px] text-[28px] font-bold">Dyn</span>
        <div className="ml-[4px] w-[17px] h-[17px] flex items-center justify-center border border-[#909090] bg-[#3a3a3a] text-[11px]">6</div>
        <span className="absolute left-[781px] top-[6px]">06</span>
        <span className="absolute left-[1098px] top-[6px] font-bold">08</span>
        <span className="absolute left-[1733px] top-[6px]">11</span>
        <span className="absolute left-[2402px] top-[6px]">16</span>
        {[796, 1114, 1747, 2417].map((x) => (
          <div key={x} className="absolute top-0 w-px h-[5px] bg-[#555555]" style={{ left: x }} />
        ))}
        <div className="ml-auto mr-[149px] self-end h-[32px] w-[214px] flex items-center justify-center bg-[#666666] text-[#f0f0f0]">
          17:00 18/11/2016
        </div>
      </div>
      <div className="flex-1 bg-[#333333]" />
    </div>
  </div>
);

export default App;
